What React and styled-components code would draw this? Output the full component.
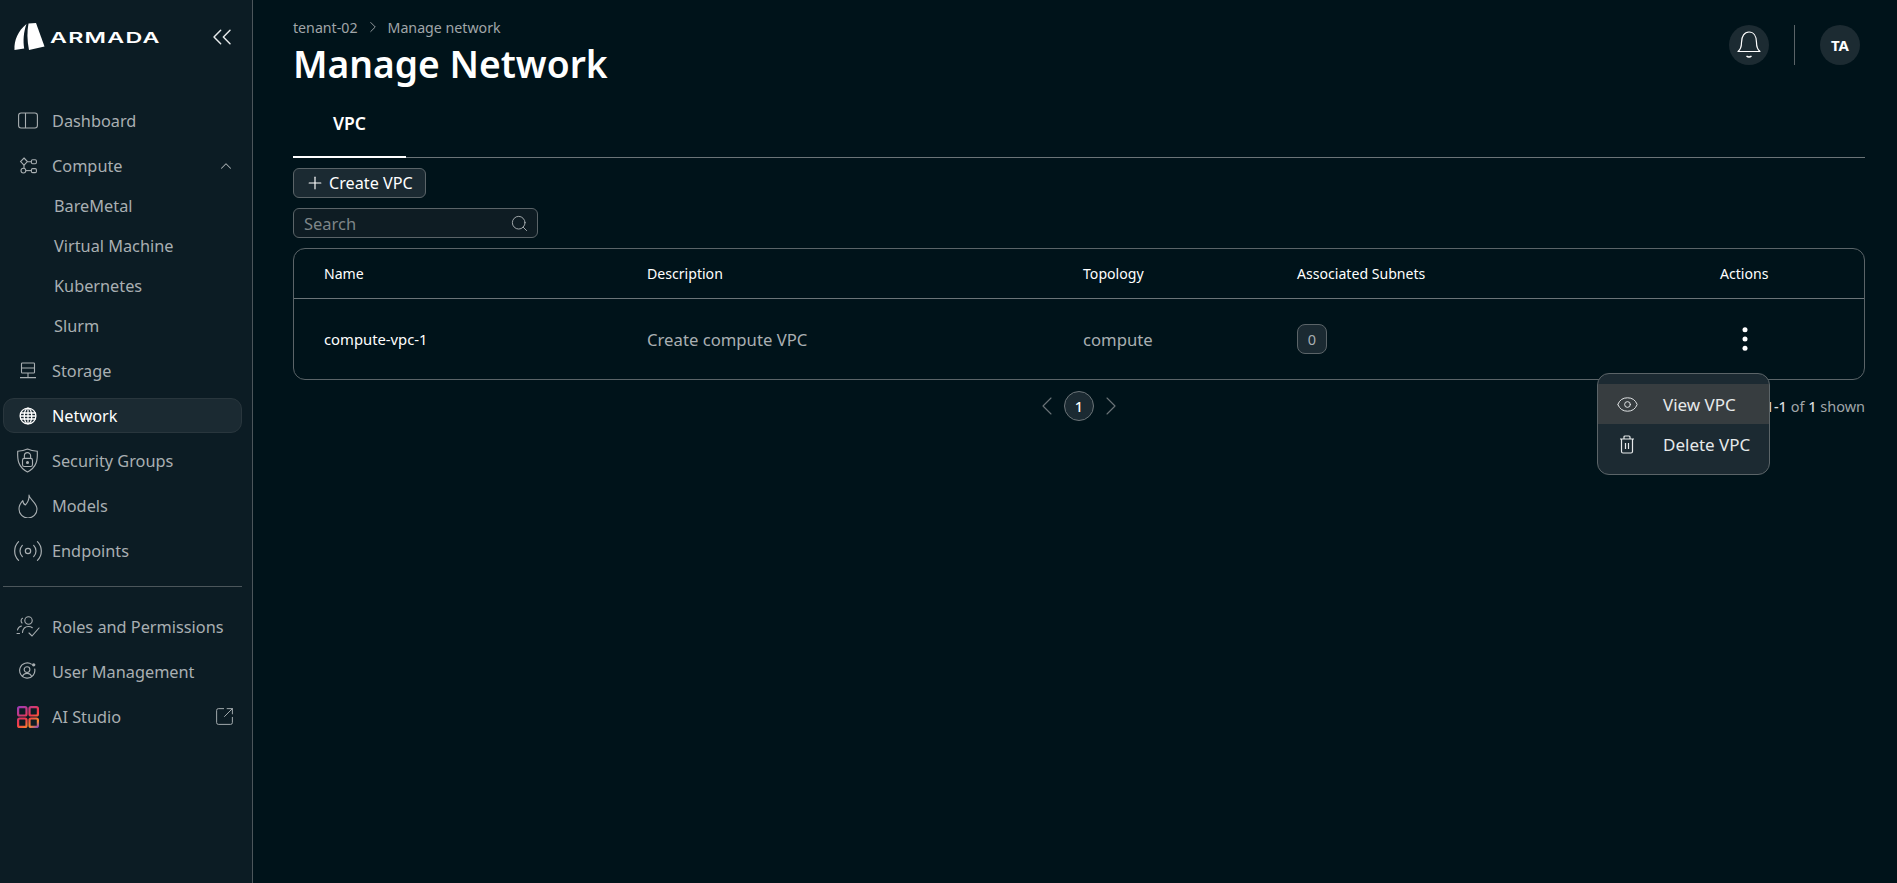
import styled, { createGlobalStyle } from 'styled-components';
import {
  ChevronLeft,
  ChevronRight,
  ChevronUp,
  ChevronsLeft,
  Eye,
  Plus,
  Radio,
  Search,
  SquareArrowOutUpRight,
} from 'lucide-react';

const GlobalStyle = createGlobalStyle`
  * { box-sizing: border-box; }
  html, body { margin: 0; height: 100%; }
  body {
    background: #00131a;
    font-family: "Noto Sans", "Open Sans", sans-serif;
    color: #fff;
    overflow: hidden;
  }
`;

const DashboardIcon = () => (
  <svg width="20" height="17" viewBox="0 0 20 17" fill="none" stroke="currentColor" strokeWidth="1.1">
    <rect x="0.6" y="1" width="18.8" height="15" rx="2.5" />
    <path d="M7.5 1v15" />
  </svg>
);

const ComputeIcon = () => (
  <svg width="18" height="18" viewBox="0 0 18 18" fill="none" stroke="currentColor" strokeWidth="1.1">
    <path d="M5 1l3.4 3.6L5 8.2 1.6 4.6z" />
    <rect x="12.4" y="2.8" width="5" height="4" rx="1.2" />
    <path d="M8.4 4.8h4M5 8.2v3" />
    <circle cx="4.4" cy="13.6" r="2.4" />
    <rect x="12.4" y="11.6" width="5" height="4" rx="1.2" />
    <path d="M6.8 13.6h5.6" />
  </svg>
);

const StorageIcon = () => (
  <svg width="18" height="18" viewBox="0 0 18 18" fill="none" stroke="currentColor" strokeWidth="1.1">
    <rect x="2.5" y="1" width="13" height="10" rx="0.8" />
    <path d="M2.5 6h13M9 11v4.2M1 15.6h16" />
  </svg>
);

const GlobeIcon = () => (
  <svg width="18" height="18" viewBox="0 0 18 18" fill="none" stroke="currentColor" strokeWidth="1.3">
    <circle cx="9" cy="9" r="7.9" />
    <ellipse cx="9" cy="9" rx="3.8" ry="7.9" />
    <path d="M1.4 6h15.2M1 9h16M1.4 12h15.2" />
    <path d="M9 1v16" />
  </svg>
);

const ShieldIcon = () => (
  <svg width="23" height="25" viewBox="0 0 22 24" fill="none" stroke="currentColor" strokeWidth="1.1">
    <path d="M11 1c2.6 1.3 5.6 2 9.4 2.1.4 8.2-.4 15.400-9.4 19.900C2 18.500 1.200 11.300 1.600 3.100 5.400 3 8.400 2.300 11 1z" />
    <rect x="6.200" y="10" width="9.600" height="7.800" rx="1.800" />
    <path d="M8 10V7.500a3 3 0 0 1 6 0V10" />
    <circle cx="11" cy="13.900" r="0.900" fill="currentColor" />
  </svg>
);

const FlameIcon = () => (
  <svg width="20" height="24" viewBox="0 0 20 24" fill="none" stroke="currentColor" strokeWidth="1.1" strokeLinejoin="round">
    <path d="M11 1c.4 4.500 8 7.500 8 14a9 9 0 0 1-18 0c0-3.600 1.700-6.200 3.800-8.400.3 2.600 1.300 3.900 2.700 4.300C9.800 8.500 11.300 5.200 11 1z" />
  </svg>
);

const RolesIcon = () => (
  <svg width="24" height="23" viewBox="0 0 24 22" fill="none" stroke="currentColor" strokeWidth="1.1" strokeLinecap="round">
    <circle cx="12.500" cy="5" r="3.700" />
    <path d="M6.500 2.700C5 3.300 4.500 6 6 7.500" />
    <path d="M1.500 14.500c.5-2.300 2.200-3.600 4-4M1 18h2.500" />
    <path d="M6.500 17c.4-3.700 2.800-6 6-6 1.500 0 2.800.4 3.800 1.200" />
    <path d="M13 17.500l3 3 7-8" />
  </svg>
);

const UserIcon = () => (
  <svg width="19" height="19" viewBox="0 0 20 20" fill="none" stroke="currentColor" strokeWidth="1.2">
    <path d="M14.500 2.500A8 8 0 1 0 17.500 7" />
    <circle cx="9.500" cy="8" r="3" />
    <path d="M4.500 15.800c.8-2.500 2.800-3.800 5-3.800s4.200 1.300 5 3.800" />
    <circle cx="16.500" cy="3" r="1.800" fill="currentColor" stroke="none" />
  </svg>
);

const StudioIcon = () => (
  <svg width="22" height="22" viewBox="0 0 22 22" fill="none" strokeWidth="2.2">
    <defs>
      <linearGradient id="studio" gradientUnits="userSpaceOnUse" x1="2" y1="0" x2="18" y2="24">
        <stop offset="0" stopColor="#9c3bb8" />
        <stop offset="0.5" stopColor="#f0384a" />
        <stop offset="0.8" stopColor="#f7892f" />
        <stop offset="1" stopColor="#7a3fc0" />
      </linearGradient>
    </defs>
    <g stroke="url(#studio)">
      <rect x="1.100" y="1.100" width="8.400" height="8.400" rx="1.500" />
      <rect x="12.500" y="1.100" width="8.400" height="8.400" rx="1.500" />
      <rect x="1.100" y="12.500" width="8.400" height="8.400" rx="1.500" />
      <rect x="12.500" y="12.500" width="8.400" height="8.400" rx="1.500" />
    </g>
  </svg>
);

const BellIcon = () => (
  <svg width="24" height="28" viewBox="0 0 24 28" fill="none" stroke="#fff" strokeWidth="1.2" strokeLinejoin="round">
    <path d="M1 20.500c2.500-2 3.500-5 3.500-9C4.500 5 7.500 1 12 1s7.500 4 7.500 10.500c0 4 1 7 3.500 9z" />
    <path d="M9.500 25c1.500 1.200 3.500 1.200 5 0" strokeWidth="1.500" />
  </svg>
);

const TrashIcon = () => (
  <svg width="16" height="19" viewBox="0 0 16 19" fill="none" stroke="currentColor" strokeWidth="1.2">
    <path d="M1 4h14M2.500 4v12.500a1.500 1.500 0 0 0 1.500 1.500h8a1.500 1.500 0 0 0 1.500-1.500V4" />
    <path d="M5 4V2a1 1 0 0 1 1-1h4a1 1 0 0 1 1 1v2M6.500 8v6M9.500 8v6" />
  </svg>
);

const DotsIcon = () => (
  <svg width="6" height="24" viewBox="0 0 6 24" fill="#fff">
    <circle cx="3" cy="2.800" r="2.500" />
    <circle cx="3" cy="12" r="2.500" />
    <circle cx="3" cy="21.200" r="2.500" />
  </svg>
);

const topNav = [
  { label: 'Dashboard', icon: <DashboardIcon /> },
  { label: 'Compute', icon: <ComputeIcon />, open: true },
];
const computeNav = ['BareMetal', 'Virtual Machine', 'Kubernetes', 'Slurm'];
const restNav = [
  { label: 'Storage', icon: <StorageIcon /> },
  { label: 'Network', icon: <GlobeIcon />, active: true },
  { label: 'Security Groups', icon: <ShieldIcon /> },
  { label: 'Models', icon: <FlameIcon /> },
  { label: 'Endpoints', icon: <Radio size={32} strokeWidth={0.9} /> },
];
const bottomNav = [
  { label: 'Roles and Permissions', icon: <RolesIcon /> },
  { label: 'User Management', icon: <UserIcon /> },
  { label: 'AI Studio', icon: <StudioIcon />, external: true },
];

const NavRow = ({ item }) => (
  <NavItem $active={item.active}>
    <NavIcon>{item.icon}</NavIcon>
    {item.label}
    {item.open && (
      <NavTail>
        <ChevronUp size={18} strokeWidth={1.4} />
      </NavTail>
    )}
    {item.external && (
      <NavTail>
        <SquareArrowOutUpRight size={21} strokeWidth={1.1} />
      </NavTail>
    )}
  </NavItem>
);

const App = () => {
  return (
    <Page>
      <GlobalStyle />
      <Sidebar>
        <LogoRow>
          <svg width="32" height="28" viewBox="0 0 32 28" fill="#fff">
            <path d="M0.500 27C0 17 4 8 12.500 1 9.500 9 9 18 10.200 25.500z" />
            <path d="M14.500 0.500L22 0 30.500 23.500 15 27C13 17 13 8 14.500 0.500z" />
          </svg>
          <LogoText>ARMADA</LogoText>
          <CollapseButton>
            <ChevronsLeft size={32} strokeWidth={1.1} />
          </CollapseButton>
        </LogoRow>
        <NavList>
          {topNav.map((item) => (
            <NavRow key={item.label} item={item} />
          ))}
          <SubList>
            {computeNav.map((label) => (
              <SubItem key={label}>{label}</SubItem>
            ))}
          </SubList>
          {restNav.map((item) => (
            <NavRow key={item.label} item={item} />
          ))}
        </NavList>
        <NavDivider />
        <NavList>
          {bottomNav.map((item) => (
            <NavRow key={item.label} item={item} />
          ))}
        </NavList>
      </Sidebar>

      <Main>
        <TopBar>
          <div>
            <Breadcrumb>
              tenant-02
              <ChevronRight size={18} strokeWidth={1.2} />
              <span>Manage network</span>
            </Breadcrumb>
            <Title>Manage Network</Title>
          </div>
          <TopActions>
            <RoundButton>
              <BellIcon />
            </RoundButton>
            <TopDivider />
            <RoundButton>TA</RoundButton>
          </TopActions>
        </TopBar>

        <Tabs>
          <Tab>VPC</Tab>
        </Tabs>

        <CreateButton>
          <Plus size={20} strokeWidth={1.4} />
          Create VPC
        </CreateButton>

        <SearchBox>
          <SearchInput placeholder="Search" readOnly />
          <Search size={19} strokeWidth={1.1} color="#b4babc" />
        </SearchBox>

        <Table>
          <HeadRow>
            <HeadCell>Name</HeadCell>
            <HeadCell>Description</HeadCell>
            <HeadCell>Topology</HeadCell>
            <HeadCell>Associated Subnets</HeadCell>
            <HeadCell>Actions</HeadCell>
          </HeadRow>
          <BodyRow>
            <NameCell>compute-vpc-1</NameCell>
            <BodyCell>Create compute VPC</BodyCell>
            <BodyCell>compute</BodyCell>
            <BodyCell>
              <CountBadge>0</CountBadge>
            </BodyCell>
            <ActionCell>
              <DotsButton>
                <DotsIcon />
              </DotsButton>
              <Menu>
                <MenuItem $hover>
                  <MenuIcon>
                    <Eye size={23} strokeWidth={1} />
                  </MenuIcon>
                  View VPC
                </MenuItem>
                <MenuItem>
                  <MenuIcon>
                    <TrashIcon />
                  </MenuIcon>
                  Delete VPC
                </MenuItem>
              </Menu>
            </ActionCell>
          </BodyRow>
        </Table>

        <Pagination>
          <span />
          <Pager>
            <ChevronLeft size={32} strokeWidth={0.8} color="#6b7478" />
            <PageNumber>1</PageNumber>
            <ChevronRight size={32} strokeWidth={0.8} color="#6b7478" />
          </Pager>
          <ShownText>
            <b>1-1</b> of <b>1</b> shown
          </ShownText>
        </Pagination>
      </Main>
    </Page>
  );
};

const Page = styled.div`
  display: flex;
  height: 100vh;
`;

const Sidebar = styled.aside`
  flex: 0 0 253px;
  background-color: #0c1c24;
  border-right: 1px solid #4c565b;
  padding: 0 10px 0 3px;
`;

const LogoRow = styled.div`
  display: flex;
  align-items: center;
  height: 74px;
  padding-left: 11px;
  color: #fff;
`;

const LogoText = styled.span`
  display: inline-block;
  margin-left: 4px;
  font-family: Inter, sans-serif;
  font-size: 15px;
  font-weight: 600;
  letter-spacing: 0.8px;
  transform: scaleX(1.55);
  transform-origin: left center;
`;

const CollapseButton = styled.span`
  display: flex;
  margin-left: auto;
  margin-right: 4px;
  color: #e6e9ea;
`;

const NavList = styled.nav`
  display: flex;
  flex-direction: column;
  gap: 10px;
  padding-top: 29px;

  & + div + & {
    padding-top: 0;
  }
`;

const NavItem = styled.div`
  display: flex;
  align-items: center;
  height: 35px;
  padding-left: 11.5px;
  border-radius: 11px;
  border: 1px solid ${(props) => (props.$active ? '#29363d' : 'transparent')};
  background-color: ${(props) => (props.$active ? '#1b2a32' : 'transparent')};
  color: ${(props) => (props.$active ? '#fff' : '#a9afb2')};
  font-size: 16.3px;
`;

const NavIcon = styled.span`
  display: flex;
  align-items: center;
  justify-content: center;
  flex: 0 0 24px;
  min-width: 0;
  margin-right: 12.5px;

  svg {
    flex-shrink: 0;
  }
`;

const NavTail = styled.span`
  display: flex;
  margin-left: auto;
  margin-right: 6px;
`;

const SubList = styled.div`
  display: flex;
  flex-direction: column;
  gap: 10px;
  margin: -2.5px 0 2.5px;
`;

const SubItem = styled.div`
  display: flex;
  align-items: center;
  height: 30px;
  padding-left: 51px;
  color: #a9afb2;
  font-size: 16.3px;
`;

const NavDivider = styled.div`
  height: 1px;
  margin: 18px 0 22px;
  background-color: #4c565b;
`;

const Main = styled.main`
  flex: 1;
  min-width: 0;
  padding: 0 32px 0 40px;
`;

const TopBar = styled.header`
  display: flex;
  justify-content: space-between;
`;

const Breadcrumb = styled.div`
  display: flex;
  align-items: center;
  gap: 6px;
  height: 20px;
  margin-top: 17px;
  color: #a0a6a9;
  font-size: 14.2px;
`;

const Title = styled.h1`
  margin: 4px 0 0;
  font-size: 37.2px;
  line-height: 46px;
  font-weight: 600;
`;

const TopActions = styled.div`
  display: flex;
  align-items: center;
  gap: 25px;
  height: 40px;
  margin: 25px 5px 0 0;
`;

const RoundButton = styled.div`
  display: flex;
  align-items: center;
  justify-content: center;
  width: 40px;
  height: 40px;
  border-radius: 50%;
  background-color: #1c2b32;
  color: #fff;
  font-size: 15px;
  font-weight: 700;
`;

const TopDivider = styled.div`
  width: 1px;
  height: 40px;
  background-color: #5b6468;
`;

const Tabs = styled.div`
  display: flex;
  height: 71px;
  padding-top: 3px;
  border-bottom: 1px solid #6b7478;
`;

const Tab = styled.div`
  display: flex;
  align-items: center;
  justify-content: center;
  width: 113px;
  height: 68px;
  border-bottom: 2px solid #fff;
  font-size: 17.5px;
  font-weight: 600;
`;

const CreateButton = styled.button`
  display: flex;
  align-items: center;
  gap: 4px;
  height: 30px;
  margin-top: 10px;
  padding: 0 12px 0 11px;
  border: 1px solid #5b6468;
  border-radius: 6px;
  background-color: #1b2a32;
  color: #fff;
  font-family: inherit;
  font-size: 16.2px;
`;

const SearchBox = styled.div`
  display: flex;
  align-items: center;
  width: 245px;
  height: 30px;
  margin-top: 10px;
  padding: 0 8px 0 10px;
  border: 1px solid #5b6468;
  border-radius: 6px;
  background-color: #0e1c23;
`;

const SearchInput = styled.input`
  flex: 1;
  min-width: 0;
  padding: 0;
  border: none;
  outline: none;
  background: transparent;
  color: #fff;
  font-family: inherit;
  font-size: 16.5px;

  &::placeholder {
    color: #7d8588;
  }
`;

const Table = styled.div`
  margin-top: 10px;
  border: 1px solid #5b6468;
  border-radius: 12px;
`;

const columns = '323px 436px 214px 423px 1fr';

const HeadRow = styled.div`
  display: grid;
  grid-template-columns: ${columns};
  align-items: center;
  height: 50px;
  padding-left: 30px;
  border-bottom: 1px solid #6b7478;
`;

const HeadCell = styled.div`
  font-size: 14.1px;
  color: #fff;
`;

const BodyRow = styled.div`
  display: grid;
  grid-template-columns: ${columns};
  align-items: center;
  height: 80px;
  padding-left: 30px;
`;

const NameCell = styled.div`
  font-size: 14.8px;
  color: #fff;
`;

const BodyCell = styled.div`
  font-size: 16.7px;
  color: #a9afb2;
`;

const CountBadge = styled.span`
  display: flex;
  align-items: center;
  justify-content: center;
  width: 30px;
  height: 30px;
  border: 1px solid #5b6468;
  border-radius: 8px;
  background-color: #1b2a32;
  font-size: 14.5px;
`;

const ActionCell = styled.div`
  position: relative;
`;

const DotsButton = styled.div`
  display: flex;
  width: 6px;
  margin-left: 22px;
`;

const Menu = styled.div`
  position: absolute;
  top: 46px;
  left: -123px;
  z-index: 2;
  width: 173px;
  height: 102px;
  padding: 10px 0;
  border: 1px solid #5b6468;
  border-radius: 12px;
  background-color: #1c2a32;
`;

const MenuItem = styled.div`
  display: flex;
  align-items: center;
  height: 40px;
  padding-left: 19px;
  background-color: ${(props) => (props.$hover ? '#373d40' : 'transparent')};
  color: #e6e9ea;
  font-size: 17px;
`;

const MenuIcon = styled.span`
  display: flex;
  justify-content: center;
  flex: 0 0 20px;
  min-width: 0;
  margin-right: 26px;

  svg {
    flex-shrink: 0;
  }
`;

const Pagination = styled.div`
  display: grid;
  grid-template-columns: 1fr auto 1fr;
  align-items: center;
  height: 30px;
  margin-top: 10px;
`;

const Pager = styled.div`
  display: flex;
  align-items: center;
  gap: 1px;
`;

const PageNumber = styled.div`
  display: flex;
  align-items: center;
  justify-content: center;
  width: 30px;
  height: 30px;
  border: 1px solid #6b7478;
  border-radius: 50%;
  background-color: #1b2a32;
  font-size: 14.5px;
  font-weight: 500;
`;

const ShownText = styled.div`
  justify-self: end;
  color: #a0a6a9;
  font-size: 14.5px;

  b {
    color: #d8dcde;
    font-weight: 500;
  }
`;

export default App;
